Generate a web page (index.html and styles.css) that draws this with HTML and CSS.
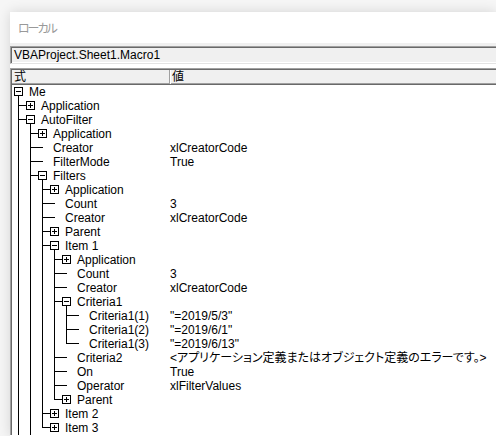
FILE: index.html
```html
<!DOCTYPE html>
<html lang="ja">
<head>
    <meta charset="UTF-8">
    <title>ローカル</title>
    <link rel="stylesheet" href="styles.css">
</head>
<body>
    <div class="window">
        <div class="title">ローカル</div>
        <div class="combo-bar">
            <div class="combo">VBAProject.Sheet1.Macro1</div>
        </div>
        <div class="list">
            <div class="list-in">
                <div class="head">
                    <div class="head-name">式</div>
                    <div class="head-val">値</div>
                </div>

                <div class="row"><div class="name"><span class="node minus root open"></span>Me</div><div class="val"></div></div>
                <div class="row"><div class="name"><i class="t"></i><span class="node plus"></span>Application</div><div class="val"></div></div>
                <div class="row"><div class="name"><i class="t"></i><span class="node minus open"></span>AutoFilter</div><div class="val"></div></div>
                <div class="row"><div class="name"><i class="v"></i><i class="t"></i><span class="node plus"></span>Application</div><div class="val"></div></div>
                <div class="row"><div class="name"><i class="v"></i><i class="t"></i><span class="node leaf"></span>Creator</div><div class="val">xlCreatorCode</div></div>
                <div class="row"><div class="name"><i class="v"></i><i class="t"></i><span class="node leaf"></span>FilterMode</div><div class="val">True</div></div>
                <div class="row"><div class="name"><i class="v"></i><i class="t"></i><span class="node minus open"></span>Filters</div><div class="val"></div></div>
                <div class="row"><div class="name"><i class="v"></i><i class="v"></i><i class="t"></i><span class="node plus"></span>Application</div><div class="val"></div></div>
                <div class="row"><div class="name"><i class="v"></i><i class="v"></i><i class="t"></i><span class="node leaf"></span>Count</div><div class="val">3</div></div>
                <div class="row"><div class="name"><i class="v"></i><i class="v"></i><i class="t"></i><span class="node leaf"></span>Creator</div><div class="val">xlCreatorCode</div></div>
                <div class="row"><div class="name"><i class="v"></i><i class="v"></i><i class="t"></i><span class="node plus"></span>Parent</div><div class="val"></div></div>
                <div class="row"><div class="name"><i class="v"></i><i class="v"></i><i class="t"></i><span class="node minus open"></span>Item 1</div><div class="val"></div></div>
                <div class="row"><div class="name"><i class="v"></i><i class="v"></i><i class="v"></i><i class="t"></i><span class="node plus"></span>Application</div><div class="val"></div></div>
                <div class="row"><div class="name"><i class="v"></i><i class="v"></i><i class="v"></i><i class="t"></i><span class="node leaf"></span>Count</div><div class="val">3</div></div>
                <div class="row"><div class="name"><i class="v"></i><i class="v"></i><i class="v"></i><i class="t"></i><span class="node leaf"></span>Creator</div><div class="val">xlCreatorCode</div></div>
                <div class="row"><div class="name"><i class="v"></i><i class="v"></i><i class="v"></i><i class="t"></i><span class="node minus open"></span>Criteria1</div><div class="val"></div></div>
                <div class="row"><div class="name"><i class="v"></i><i class="v"></i><i class="v"></i><i class="v"></i><i class="t"></i><span class="node leaf"></span>Criteria1(1)</div><div class="val">"=2019/5/3"</div></div>
                <div class="row"><div class="name"><i class="v"></i><i class="v"></i><i class="v"></i><i class="v"></i><i class="t"></i><span class="node leaf"></span>Criteria1(2)</div><div class="val">"=2019/6/1"</div></div>
                <div class="row"><div class="name"><i class="v"></i><i class="v"></i><i class="v"></i><i class="v"></i><i class="c"></i><span class="node leaf"></span>Criteria1(3)</div><div class="val">"=2019/6/13"</div></div>
                <div class="row"><div class="name"><i class="v"></i><i class="v"></i><i class="v"></i><i class="t"></i><span class="node leaf"></span>Criteria2</div><div class="val err">&lt;アプリケーション定義またはオブジェクト定義のエラーです。&gt;</div></div>
                <div class="row"><div class="name"><i class="v"></i><i class="v"></i><i class="v"></i><i class="t"></i><span class="node leaf"></span>On</div><div class="val">True</div></div>
                <div class="row"><div class="name"><i class="v"></i><i class="v"></i><i class="v"></i><i class="t"></i><span class="node leaf"></span>Operator</div><div class="val">xlFilterValues</div></div>
                <div class="row"><div class="name"><i class="v"></i><i class="v"></i><i class="v"></i><i class="c"></i><span class="node plus"></span>Parent</div><div class="val"></div></div>
                <div class="row"><div class="name"><i class="v"></i><i class="v"></i><i class="t"></i><span class="node plus"></span>Item 2</div><div class="val"></div></div>
                <div class="row"><div class="name"><i class="v"></i><i class="v"></i><i class="c"></i><span class="node plus"></span>Item 3</div><div class="val"></div></div>
            </div>
        </div>
    </div>
</body>
</html>
```

FILE: styles.css
```css
html, body {
    margin: 0;
    height: 100%;
    overflow: hidden;
}
body {
    padding: 12px 0 0 10px;
    box-sizing: border-box;
    background-color: #f6f6f6;
    font-family: "Liberation Sans", "Noto Sans CJK JP", sans-serif;
    font-size: 12px;
    color: #000;
}
.window {
    width: 486px;
    height: 424px;
    overflow: hidden;
    background-color: #fff;
    box-shadow: 0 0 12px rgba(0, 0, 0, 0.14);
}
.title {
    height: 31px;
    line-height: 31px;
    padding-left: 8px;
    font-family: "Noto Sans CJK JP", sans-serif;
    font-feature-settings: "palt";
    letter-spacing: -2px;
    color: #999;
}
.combo-bar {
    background-color: #f0f0f0;
    padding-top: 3px;
}
.combo {
    height: 14px;
    line-height: 14px;
    padding: 1px 0 1px 3px;
    border-top: 1px solid #a0a0a0;
    border-left: 1px solid #a0a0a0;
    border-bottom: 1px solid #e3e3e3;
    box-shadow: inset 1px 1px #696969, inset 0 -1px #fff;
    background-color: #f0f0f0;
}
.list {
    margin-top: 4px;
    border-top: 1px solid #a0a0a0;
    border-left: 1px solid #a0a0a0;
}
.list-in {
    border-top: 1px solid #696969;
    border-left: 1px solid #696969;
}
.head {
    display: flex;
    height: 14px;
    line-height: 14px;
    background-color: #f0f0f0;
    border-bottom: 1px solid #696969;
    box-shadow: inset 0 -1px #a0a0a0;
}
.head-name {
    box-sizing: border-box;
    width: 158px;
    padding-left: 2px;
    border-right: 1px solid #a0a0a0;
    box-shadow: 1px 0 #fff;
}
.head-val {
    padding-left: 2px;
}

/* tree rows */
.row {
    display: grid;
    grid-template-columns: 158px 1fr;
    height: 14px;
    line-height: 14px;
    white-space: nowrap;
}
.name {
    display: flex;
}
.name i {
    flex: none;
    width: 12px;
    height: 14px;
}
.v {
    background: linear-gradient(#000, #000) 6px 0 / 1px 14px no-repeat;
}
.t {
    background:
        linear-gradient(#000, #000) 6px 0 / 1px 14px no-repeat,
        linear-gradient(#000, #000) 6px 6px / 6px 1px no-repeat;
}
.c {
    background:
        linear-gradient(#000, #000) 6px 0 / 1px 7px no-repeat,
        linear-gradient(#000, #000) 6px 6px / 6px 1px no-repeat;
}
.node {
    flex: none;
    width: 17px;
    height: 14px;
}
.leaf {
    background: linear-gradient(#000, #000) 0 6px / 7px 1px no-repeat;
}
.plus, .minus {
    background: linear-gradient(#000, #000) 0 6px / 2px 1px no-repeat;
}
.open {
    background:
        linear-gradient(#000, #000) 0 6px / 2px 1px no-repeat,
        linear-gradient(#000, #000) 6px 11px / 1px 3px no-repeat;
}
.root.open {
    background: linear-gradient(#000, #000) 6px 11px / 1px 3px no-repeat;
}
.plus::before, .minus::before {
    content: "";
    display: block;
    width: 7px;
    height: 7px;
    margin: 2px 0 0 2px;
    border: 1px solid #000;
}
.minus::before {
    background: linear-gradient(#000, #000) center / 5px 1px no-repeat, #fff;
}
.plus::before {
    background:
        linear-gradient(#000, #000) center / 5px 1px no-repeat,
        linear-gradient(#000, #000) center / 1px 5px no-repeat,
        #fff;
}
.err {
    font-feature-settings: "palt";
}
```
